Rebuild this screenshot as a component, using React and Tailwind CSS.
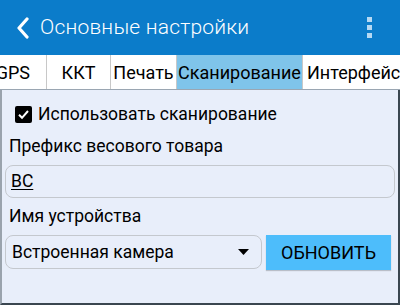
import React from 'react';

export default function App() {
  const tabs = [
    { label: 'GPS', cls: 'w-[46px] justify-end pr-[16px]' },
    { label: 'ККТ', cls: 'w-[64px] justify-center' },
    { label: 'Печать', cls: 'w-[66px] justify-center' },
    { label: 'Сканирование', cls: 'w-[126px] justify-center bg-[#7fc4ea]' },
    { label: 'Интерфейс', cls: 'w-[98px] justify-start pl-[4px]' },
  ];

  return (
    <div className="w-[400px] h-[305px] overflow-hidden bg-white text-black" style={{ fontFamily: 'Roboto, "Noto Sans", sans-serif' }}>
      {/* Header */}
      <div className="h-[55px] bg-[#0b7cca] flex items-center text-white">
        <svg width="14" height="22" viewBox="0 0 14 22" className="ml-[16px] mr-[10px]">
          <path d="M11 2 L3 11 L11 20" fill="none" stroke="white" strokeWidth="3.2" strokeLinecap="round" strokeLinejoin="round" />
        </svg>
        <span className="text-[21px] font-light tracking-[0.2px]">Основные настройки</span>
        <div className="ml-auto mr-[28px] flex flex-col gap-[3px]">
          <div className="w-[5px] h-[5px] bg-[#b6d9f3]" />
          <div className="w-[5px] h-[5px] bg-[#b6d9f3]" />
          <div className="w-[5px] h-[5px] bg-[#b6d9f3]" />
        </div>
      </div>

      {/* Tabs */}
      <div className="flex h-[35px] border-b border-[#9aa6b2]">
        {tabs.map((t, i) => (
          <div
            key={t.label}
            className={`flex items-center shrink-0 text-[18px] ${i > 0 ? 'border-l border-[#c8c8c8]' : ''} ${t.cls}`}
          >
            {t.label}
          </div>
        ))}
      </div>

      {/* Content */}
      <div className="h-[215px] bg-[#e8eefa] border-l-2 border-r-2 border-b-2 border-l-[#9aa3ad] border-r-[#3a4650] border-b-[#3a4650] px-[3px] pt-[14px] text-[17.5px]">
        <label className="flex items-center gap-[6px] ml-[10px] h-[20px]">
          <span className="w-[17px] h-[17px] rounded-[2px] bg-black flex items-center justify-center">
            <svg width="13" height="13" viewBox="0 0 13 13">
              <path d="M2 6.8 L5 9.8 L11 3" fill="none" stroke="white" strokeWidth="2" />
            </svg>
          </span>
          <span>Использовать сканирование</span>
        </label>

        <div className="mt-[12px] ml-[4px] leading-[20px]">Префикс весового товара</div>
        <div className="mt-[9px] h-[33px] rounded-[8px] border border-[#c4c8ce] flex items-center px-[5px]">
          <span className="underline underline-offset-[2px]">ВС</span>
        </div>

        <div className="mt-[8px] ml-[4px] leading-[20px]">Имя устройства</div>
        <div className="mt-[9px] flex gap-[4px]">
          <div className="w-[257px] h-[34px] rounded-[8px] border border-[#c4c8ce] flex items-center pl-[6px] pr-[12px]">
            <span>Встроенная камера</span>
            <svg width="11" height="6" viewBox="0 0 11 6" className="ml-auto">
              <path d="M0 0 L11 0 L5.5 6 Z" fill="black" />
            </svg>
          </div>
          <div className="w-[125px] h-[35px] bg-[#4dbdfb] flex items-center justify-center shadow-[0_1px_1px_rgba(0,0,0,0.2)] text-[18px]">
            ОБНОВИТЬ
          </div>
        </div>
      </div>
    </div>
  );
}
